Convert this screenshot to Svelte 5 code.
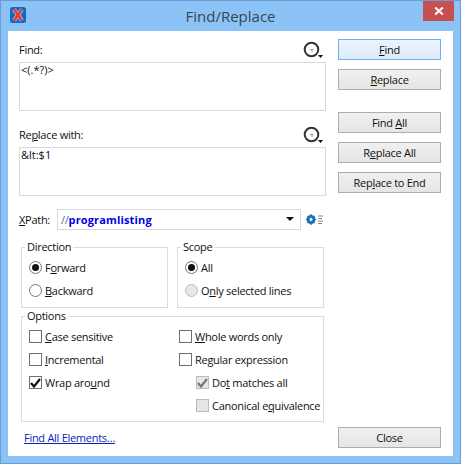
<script>
  const sideTop = [
    { pre: '', key: 'F', post: 'ind', primary: true },
    { pre: '', key: 'R', post: 'eplace' }
  ];
  const sideMid = [
    { pre: 'Find ', key: 'A', post: 'll' },
    { pre: 'R', key: 'e', post: 'place All' },
    { pre: 'Rep', key: 'l', post: 'ace to End' }
  ];
</script>

<div class="window">
  <header class="titlebar">
    <svg class="logo" width="16" height="16" viewBox="0 0 16 16">
      <rect width="16" height="16" rx="2.5" fill="#1467c8" />
      <path d="M4 2.5 L12 13.5 M12 2.5 L4 13.5" stroke="#fff" stroke-width="4.2" opacity="0.55" />
      <path d="M4.2 2.5 L11.8 13.5 M11.8 2.5 L4.2 13.5" stroke="#ee3a22" stroke-width="2.6" />
    </svg>
    <h1>Find/Replace</h1>
    <button class="close-x" aria-label="Close window">
      <svg width="10" height="10" viewBox="0 0 10 10"><path d="M1.2 1.5 L8.8 8.5 M8.8 1.5 L1.2 8.5" stroke="#fff" stroke-width="2" /></svg>
    </button>
  </header>

  <main class="body">
    <div class="left">
      <div class="label-row">
        <span>Find:</span>
        <svg class="history" width="20" height="18" viewBox="0 0 20 18">
          <circle cx="8.500" cy="8.500" r="6.800" fill="#fff" stroke="#333" stroke-width="2" />
          <path d="M7 8.500 H10.500 M9 8.500 V11" stroke="#999" stroke-width="1" fill="none" />
          <path d="M15 14 H20 L17.500 17 Z" fill="#111" />
        </svg>
      </div>
      <div class="textbox">&lt;(.*?)&gt;</div>

      <div class="label-row second">
        <span>Re<u>p</u>lace with:</span>
        <svg class="history" width="20" height="18" viewBox="0 0 20 18">
          <circle cx="8.500" cy="8.500" r="6.800" fill="#fff" stroke="#333" stroke-width="2" />
          <path d="M7 8.500 H10.500 M9 8.500 V11" stroke="#999" stroke-width="1" fill="none" />
          <path d="M15 14 H20 L17.500 17 Z" fill="#111" />
        </svg>
      </div>
      <div class="textbox">&amp;lt:$1</div>

      <div class="xpath-row">
        <span class="xpath-label"><u>X</u>Path:</span>
        <div class="combo">
          <span class="slashes">//</span><b>programlisting</b>
          <svg class="caret" width="8" height="4" viewBox="0 0 8 4"><path d="M0 0 H8 L4 4 Z" fill="#111" /></svg>
        </div>
        <svg class="gear" width="17" height="11" viewBox="0 0 17 11">
          <circle cx="5" cy="5.500" r="3.200" fill="none" stroke="#1a6fb5" stroke-width="2.600" />
          <path d="M5 0 V11 M0 5.500 H10 M1.500 2 L8.500 9 M8.500 2 L1.500 9" stroke="#1a6fb5" stroke-width="1.200" />
          <circle cx="5" cy="5.500" r="1.400" fill="#fff" />
          <path d="M12 2 H17 M12 4.500 H16 M12 7 H17 M12 9.500 H16" stroke="#888" stroke-width="1" />
        </svg>
      </div>

      <div class="pair">
        <fieldset class="direction">
          <legend>Direction</legend>
          <label class="opt"><span class="radio on"></span><span>F<u>o</u>rward</span></label>
          <label class="opt"><span class="radio"></span><span><u>B</u>ackward</span></label>
        </fieldset>
        <fieldset class="scope">
          <legend>Scope</legend>
          <label class="opt"><span class="radio on"></span><span>All</span></label>
          <label class="opt"><span class="radio off"></span><span>O<u>n</u>ly selected lines</span></label>
        </fieldset>
      </div>

      <fieldset class="options">
        <legend>Options</legend>
        <div class="opt-grid">
          <label class="opt"><span class="check"></span><span><u>C</u>ase sensitive</span></label>
          <label class="opt"><span class="check"></span><span><u>W</u>hole words only</span></label>
          <label class="opt"><span class="check"></span><span><u>I</u>ncremental</span></label>
          <label class="opt"><span class="check"></span><span>Re<u>g</u>ular expression</span></label>
          <label class="opt"><span class="check">
            <svg width="11" height="10" viewBox="0 0 11 10"><path d="M1 5 L4 8.500 L10 1" fill="none" stroke="#111" stroke-width="2.200" /></svg>
          </span><span>Wrap aro<u>u</u>nd</span></label>
          <label class="opt sub"><span class="check off">
            <svg width="11" height="10" viewBox="0 0 11 10"><path d="M1 5 L4 8.500 L10 1" fill="none" stroke="#777" stroke-width="2.200" /></svg>
          </span><span>Do<u>t</u> matches all</span></label>
          <span></span>
          <label class="opt sub"><span class="check off"></span><span>Canonical e<u>q</u>uivalence</span></label>
        </div>
      </fieldset>

      <a class="link" href="#top">Find All Elements…</a>
    </div>

    <div class="side">
      <div class="btn-group">
        {#each sideTop as b}
          <button class="btn" class:primary={b.primary}>{b.pre}<u>{b.key}</u>{b.post}</button>
        {/each}
      </div>
      <div class="btn-group">
        {#each sideMid as b}
          <button class="btn">{b.pre}<u>{b.key}</u>{b.post}</button>
        {/each}
      </div>
      <button class="btn close">Close</button>
    </div>
  </main>
</div>

<style>
  :global(body) { margin: 0; }
  .window {
    box-sizing: border-box;
    width: 461px;
    height: 464px;
    display: flex;
    flex-direction: column;
    background: #8bc3f7;
    border: 1px solid #6c9dd0;
    font-family: "Open Sans", "Noto Sans", sans-serif;
    font-size: 11px;
    letter-spacing: -0.28px;
    color: #111;
  }
  .titlebar {
    flex: none;
    height: 30px;
    position: relative;
    display: flex;
    align-items: center;
    justify-content: center;
  }
  .logo { position: absolute; left: 9px; top: 6px; }
  h1 {
    margin: 0;
    font-size: 15px;
    font-weight: 400;
    letter-spacing: 0;
    color: #3a4550;
  }
  .close-x {
    position: absolute;
    right: 6px;
    top: 0;
    width: 31px;
    height: 20px;
    padding: 0;
    border: 0;
    background: #c75050;
    display: flex;
    align-items: center;
    justify-content: center;
  }
  .body {
    flex: 1;
    margin: 0 7px 7px;
    padding: 8px 12px 8px 11px;
    background: #fff;
    display: grid;
    grid-template-columns: 307px 103px;
    column-gap: 12px;
  }
  .left { display: flex; flex-direction: column; }
  .label-row {
    height: 23px;
    display: flex;
    align-items: center;
    justify-content: space-between;
    padding-bottom: 2px;
    box-sizing: border-box;
  }
  .label-row.second { margin-top: 13px; }
  .history { margin-right: 3px; }
  .textbox {
    box-sizing: border-box;
    height: 49px;
    border: 1px solid #d9d9d9;
    padding: 0 1px;
    line-height: 14px;
    letter-spacing: 0;
  }
  .xpath-row {
    margin-top: 13px;
    height: 20px;
    display: flex;
    align-items: center;
  }
  .xpath-label { width: 38px; }
  .combo {
    box-sizing: border-box;
    width: 244px;
    height: 21px;
    border: 1px solid #d9d9d9;
    padding-left: 3px;
    display: flex;
    align-items: center;
    position: relative;
  }
  .combo b { color: #0000e6; font-weight: 700; letter-spacing: 0.15px; }
  .slashes { color: #4466aa; }
  .caret { position: absolute; right: 6px; top: 7px; }
  .gear { margin-left: 5px; }
  .pair {
    margin-top: 18px;
    margin-left: 2px;
    display: flex;
    gap: 9px;
  }
  fieldset {
    box-sizing: border-box;
    margin: 0;
    padding: 2px 0 0 7px;
    border: 1px solid #dcdcdc;
    min-width: 0;
  }
  legend { padding: 0 2px; margin-left: -4px; line-height: 14px; }
  .direction, .scope { height: 68px; margin-top: -7px; width: 147px; }
  .options {
    margin: 1px 0 0 2px;
    width: 303px;
    height: 113px;
  }
  .opt {
    height: 23px;
    display: flex;
    align-items: center;
    gap: 3px;
    white-space: nowrap;
  }
  .opt-grid {
    display: grid;
    grid-template-columns: 150px 1fr;
  }
  .radio {
    box-sizing: border-box;
    width: 13px;
    height: 13px;
    border: 1px solid #777;
    border-radius: 50%;
    background: #fff;
    display: flex;
    align-items: center;
    justify-content: center;
  }
  .radio.on::after {
    content: "";
    width: 7px;
    height: 7px;
    border-radius: 50%;
    background: #111;
  }
  .radio.off { background: #e6e6e6; border-color: #bcbcbc; }
  .check {
    box-sizing: border-box;
    width: 13px;
    height: 13px;
    border: 1px solid #707070;
    background: #fff;
    display: flex;
    align-items: center;
    justify-content: center;
  }
  .check.off { background: #e6e6e6; border-color: #bcbcbc; }
  .sub { margin-left: 17px; }
  .link {
    margin-top: 8px;
    margin-left: 5px;
    color: #0a22b8;
  }
  .side { display: flex; flex-direction: column; }
  .btn-group { display: flex; flex-direction: column; gap: 9px; margin-bottom: 22px; }
  .btn {
    box-sizing: border-box;
    width: 103px;
    height: 21px;
    padding: 0;
    border: 1px solid #adadad;
    background: linear-gradient(#f0f0f0, #e5e5e5);
    font: inherit;
    letter-spacing: inherit;
    color: #111;
  }
  .btn.primary {
    border-color: #6fb0ee;
    background: linear-gradient(#ecf4fc, #dcebfa);
  }
  .close { margin-top: auto; }
</style>
